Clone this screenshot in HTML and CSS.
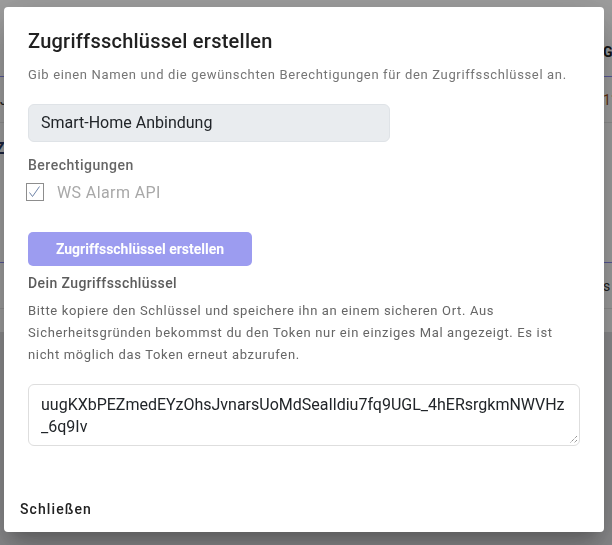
FILE: index.html
```html
<!DOCTYPE html>
<html lang="de">
<head>
<meta charset="utf-8">
<title>Zugriffsschlüssel erstellen</title>
<link rel="stylesheet" href="styles.css">
</head>
<body>
<div class="bg-page">
  <div class="bg-top">
    <div class="bg-head"><span class="bg-cell"></span><span class="bg-cell bg-strong">Gültig</span></div>
    <div class="bg-row"><span class="bg-cell bg-left">Js</span><span class="bg-cell bg-num">11.</span></div>
    <div class="bg-gap"><span class="bg-z">Z</span></div>
    <div class="bg-head bg-head2"><span class="bg-cell"></span><span class="bg-cell"></span></div>
    <div class="bg-row bg-row2"><span class="bg-cell"></span><span class="bg-cell bg-dark">s</span></div>
  </div>
  <div class="bg-bottom"></div>
</div>
<div class="overlay"></div>
<div class="dialog" role="dialog">
  <div class="dialog-body">
    <h2 class="dialog-title">Zugriffsschlüssel erstellen</h2>
    <p class="dialog-sub">Gib einen Namen und die gewünschten Berechtigungen für den Zugriffsschlüssel an.</p>
    <div class="name-input">Smart-Home Anbindung</div>
    <div class="label">Berechtigungen</div>
    <div class="check-row">
      <svg class="check-box" width="18" height="18" viewBox="0 0 18 18">
        <rect x="0.5" y="0.5" width="17" height="17" fill="#fff" stroke="#8d8d8d"/>
        <polyline points="3.5,9.5 6.5,13.5 13.5,3.5" fill="none" stroke="#6f84a8" stroke-width="1"/>
      </svg>
      <span class="check-label">WS Alarm API</span>
    </div>
    <button class="create-btn">Zugriffsschlüssel erstellen</button>
    <div class="label key-label">Dein Zugriffsschlüssel</div>
    <p class="hint">Bitte kopiere den Schlüssel und speichere ihn an einem sicheren Ort. Aus Sicherheitsgründen bekommst du den Token nur ein einziges Mal angezeigt. Es ist nicht möglich das Token erneut abzurufen.</p>
    <div class="token">uugKXbPEZmedEYzOhsJvnarsUoMdSeaIldiu7fq9UGL_4hERsrgkmNWVHz_6q9Iv<svg class="grip" width="10" height="10" viewBox="0 0 10 10"><path d="M9 2 L2 9 M9 6 L6 9" stroke="#666" stroke-width="1" stroke-dasharray="1 1"/></svg></div>
  </div>
  <div class="dialog-footer">
    <button class="close-btn">Schließen</button>
  </div>
</div>
</body>
</html>
```
FILE: styles.css
```css
html, body {
  margin: 0;
  padding: 0;
  height: 100%;
  overflow: hidden;
}
body {
  font-family: Roboto, "Liberation Sans", sans-serif;
  background: #fff;
}

/* background page (dimmed) */
.bg-page {
  display: flex;
  flex-direction: column;
  height: 100%;
}
.bg-top {
  height: 332px;
  background: #fff;
}
.bg-bottom {
  flex: 1;
  background: #e0e0e3;
}
.bg-head {
  display: grid;
  grid-template-columns: 603px 1fr;
  height: 76px;
  border-bottom: 1px solid #8f8ff6;
  align-items: end;
}
.bg-head2 {
  height: 89px;
}
.bg-row {
  display: grid;
  grid-template-columns: 603px 1fr;
  height: 45px;
  border-bottom: 1px solid #e8e8e8;
  align-items: center;
}
.bg-cell {
  font-size: 14px;
  white-space: nowrap;
  overflow: hidden;
}
.bg-head .bg-strong {
  font-weight: 700;
  color: #222;
  padding-bottom: 16px;
}
.bg-num { color: #a0521a; }
.bg-dark { color: #333; }
.bg-left { color: #333; }
.bg-gap {
  height: 50px;
  display: flex;
  align-items: center;
}
.bg-z {
  margin-left: -5px;
  font-size: 16px;
  font-weight: 700;
  color: #2b3a66;
}

.overlay {
  position: fixed;
  inset: 0;
  background: rgba(0, 0, 0, 0.38);
}

/* dialog */
.dialog {
  position: fixed;
  left: 4px;
  top: 7px;
  width: 600px;
  height: 525px;
  background: #fff;
  border-radius: 4px;
  box-shadow: 0 11px 15px -7px rgba(0,0,0,.2), 0 24px 38px 3px rgba(0,0,0,.14), 0 9px 46px 8px rgba(0,0,0,.12);
  display: flex;
  flex-direction: column;
  box-sizing: border-box;
}
.dialog-body {
  padding: 18px 24px 0;
  display: flex;
  flex-direction: column;
}
.dialog-title {
  margin: 0;
  font-size: 20px;
  font-weight: 500;
  line-height: 32px;
  color: #212121;
  letter-spacing: 0.25px;
}
.dialog-sub {
  margin: 8px 0 0;
  font-size: 13px;
  line-height: 20px;
  letter-spacing: 0.65px;
  color: #757575;
}
.name-input {
  margin-top: 19px;
  width: 362px;
  height: 38px;
  box-sizing: border-box;
  background: #e9ecef;
  border: 1px solid #dfe3e7;
  border-radius: 6px;
  padding: 0 12px;
  font-size: 16px;
  line-height: 36px;
  color: #212529;
}
.label {
  margin-top: 13px;
  font-size: 14px;
  font-weight: 500;
  line-height: 20px;
  letter-spacing: 0.5px;
  color: #666;
}
.check-row {
  margin-top: 7px;
  display: flex;
  align-items: center;
  gap: 13px;
  height: 20px;
  margin-left: -2px;
}
.check-box {
  flex: none;
}
.check-label {
  font-size: 16px;
  letter-spacing: 0.4px;
  color: #a8a8a8;
}
.create-btn {
  margin-top: 30px;
  align-self: flex-start;
  width: 224px;
  height: 34px;
  border: none;
  border-radius: 5px;
  background: #9c9cf0;
  color: #fff;
  font-family: inherit;
  font-size: 14px;
  font-weight: 700;
  padding: 0;
}
.key-label {
  margin-top: 7px;
  font-size: 14px;
  letter-spacing: 0.4px;
  color: #5c5c5c;
}
.hint {
  margin: 7px 0 0;
  font-size: 13px;
  line-height: 22px;
  letter-spacing: 0.65px;
  color: #666;
}
.token {
  position: relative;
  margin-top: 18px;
  height: 62px;
  box-sizing: border-box;
  border: 1px solid #dedede;
  border-radius: 6px;
  padding: 9px 12px;
  font-size: 16px;
  line-height: 22px;
  color: #212529;
  word-break: break-all;
}
.grip {
  position: absolute;
  right: 1px;
  bottom: 1px;
}
.dialog-footer {
  margin-top: auto;
  padding: 0 8px 5px;
  display: flex;
}
.close-btn {
  height: 36px;
  padding: 0 8px;
  border: none;
  background: transparent;
  font-family: inherit;
  font-size: 14px;
  font-weight: 500;
  letter-spacing: 1.1px;
  color: #212121;
}
```
